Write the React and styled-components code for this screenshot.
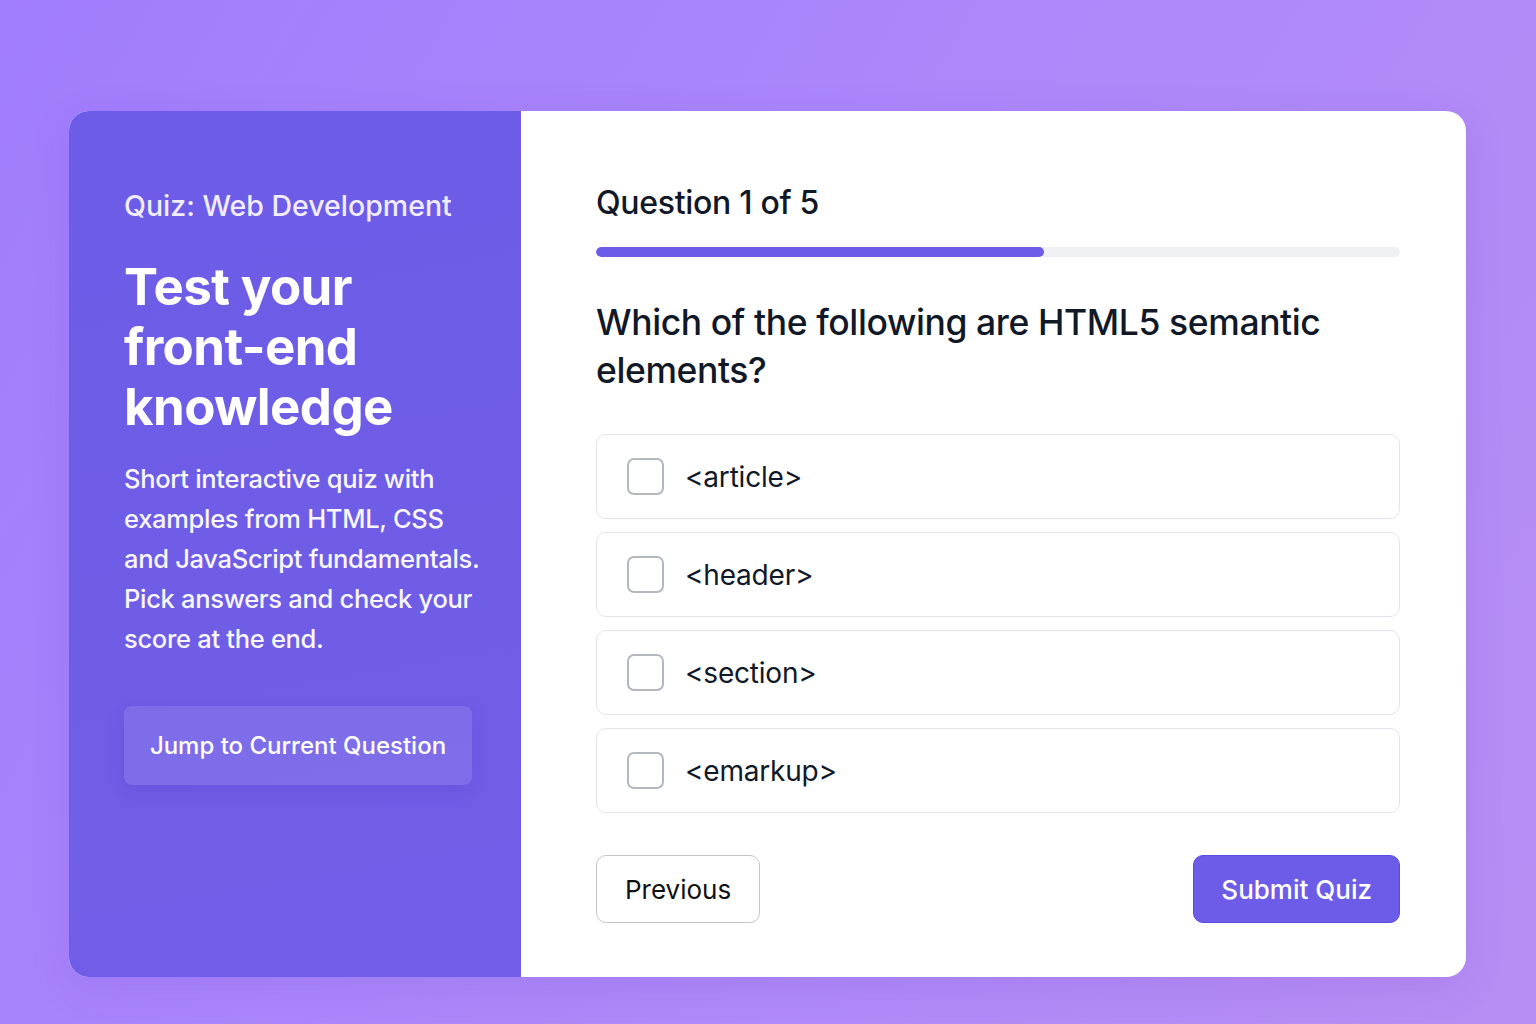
import React, { useState } from "react";
import styled, { createGlobalStyle } from "styled-components";

const GlobalStyle = createGlobalStyle`
  html, body {
    margin: 0;
    padding: 0;
  }
  body {
    font-family: Inter, "Noto Sans", "Liberation Sans", sans-serif;
    -webkit-font-smoothing: antialiased;
  }
  * { box-sizing: border-box; }
`;

const Page = styled.div`
  width: 1536px;
  height: 1024px;
  background: linear-gradient(120deg, #a07dfd 0%, #ad88fa 50%, #b88ef4 100%);
  padding: 111px 70px 47px 69px;
`;

const Card = styled.div`
  display: flex;
  width: 1397px;
  height: 866px;
  border-radius: 20px;
  overflow: hidden;
  background: #ffffff;
  box-shadow: 0 10px 40px rgba(80, 40, 180, 0.12);
`;

const Side = styled.aside`
  width: 452px;
  flex-shrink: 0;
  background: linear-gradient(170deg, #6c5ce7 0%, #6f5de6 60%, #705ee8 100%);
  padding: 78px 40px 0 55px;
  display: flex;
  flex-direction: column;
  align-items: flex-start;
  color: #fff;
`;

const Kicker = styled.div`
  font-size: 28.5px;
  font-weight: 500;
  color: #f1ecff;
  line-height: 34px;
  letter-spacing: 0;
`;

const Title = styled.h1`
  margin: 34px 0 0;
  font-size: 51px;
  font-weight: 700;
  line-height: 60px;
  letter-spacing: -0.6px;
`;

const Blurb = styled.p`
  margin: 22px 0 0;
  font-size: 25.5px;
  font-weight: 450;
  line-height: 40px;
  color: #f8f6ff;
  letter-spacing: -0.3px;
`;

const JumpButton = styled.button`
  margin-top: 47px;
  width: 348px;
  height: 79px;
  border: none;
  border-radius: 8px;
  background: rgba(255, 255, 255, 0.1);
  box-shadow: 0 6px 18px rgba(60, 30, 160, 0.12);
  color: #fff;
  font-family: inherit;
  font-size: 24px;
  font-weight: 500;
  cursor: pointer;
`;

const Main = styled.main`
  flex: 1;
  padding: 72px 66px 0 75px;
  display: flex;
  flex-direction: column;
  & > * { flex-shrink: 0; }
`;

const Counter = styled.h2`
  margin: 0;
  font-size: 32px;
  font-weight: 500;
  line-height: 40px;
  color: #111827;
  letter-spacing: -0.3px;
`;

const Track = styled.div`
  margin-top: 24px;
  height: 10px;
  border-radius: 5px;
  background: #eef0f4;
  overflow: hidden;
`;

const Fill = styled.div`
  height: 100%;
  border-radius: 5px;
  background: #6c5ce7;
`;

const Question = styled.h3`
  margin: 42px 0 0;
  font-size: 35.5px;
  font-weight: 500;
  line-height: 48px;
  color: #111827;
  letter-spacing: -0.4px;
`;

const Options = styled.div`
  margin-top: 39px;
  display: flex;
  flex-direction: column;
  gap: 13px;
`;

const Option = styled.label`
  display: flex;
  align-items: center;
  height: 85px;
  padding: 0 30px;
  border: 1.5px solid #e2e6ea;
  border-radius: 10px;
  cursor: pointer;
  background: #fff;
`;

const Box = styled.span`
  width: 37px;
  height: 37px;
  border-radius: 7px;
  border: 2px solid ${(p) => (p.$on ? "#6c5ce7" : "#b3b8bf")};
  background: ${(p) => (p.$on ? "#6c5ce7" : "#fff")};
  flex-shrink: 0;
`;

const OptionText = styled.span`
  margin-left: 21px;
  font-size: 28px;
  color: #111827;
  letter-spacing: -0.2px;
`;

const Footer = styled.div`
  margin-top: 42px;
  display: flex;
  justify-content: space-between;
`;

const NavButton = styled.button`
  height: 68px;
  padding: 0 ${(p) => (p.$primary ? "27px" : "28px")};
  border-radius: 10px;
  border: 1.5px solid ${(p) => (p.$primary ? "#5b4be0" : "#c3c7cc")};
  background: ${(p) => (p.$primary ? "#6c5ce7" : "#fff")};
  color: ${(p) => (p.$primary ? "#fff" : "#111")};
  font-family: inherit;
  font-size: 26px;
  font-weight: ${(p) => (p.$primary ? 500 : 400)};
  cursor: pointer;
`;

const answers = ["<article>", "<header>", "<section>", "<emarkup>"];

export default function App() {
  const [picked, setPicked] = useState({});
  const progress = 55.7;

  return (
    <>
      <GlobalStyle />
      <Page>
        <Card>
          <Side>
            <Kicker>Quiz: Web Development</Kicker>
            <Title>
              Test your
              <br />
              front-end
              <br />
              knowledge
            </Title>
            <Blurb>
              Short interactive quiz with
              <br />
              examples from HTML, CSS
              <br />
              and JavaScript fundamentals.
              <br />
              Pick answers and check your
              <br />
              score at the end.
            </Blurb>
            <JumpButton type="button">Jump to Current Question</JumpButton>
          </Side>
          <Main>
            <Counter>Question 1 of 5</Counter>
            <Track>
              <Fill style={{ width: `${progress}%` }} />
            </Track>
            <Question>
              Which of the following are HTML5 semantic
              <br />
              elements?
            </Question>
            <Options>
              {answers.map((a) => (
                <Option
                  key={a}
                  onClick={() => setPicked({ ...picked, [a]: !picked[a] })}
                >
                  <Box $on={picked[a]} />
                  <OptionText>{a}</OptionText>
                </Option>
              ))}
            </Options>
            <Footer>
              <NavButton type="button">Previous</NavButton>
              <NavButton type="button" $primary>
                Submit Quiz
              </NavButton>
            </Footer>
          </Main>
        </Card>
      </Page>
    </>
  );
}
